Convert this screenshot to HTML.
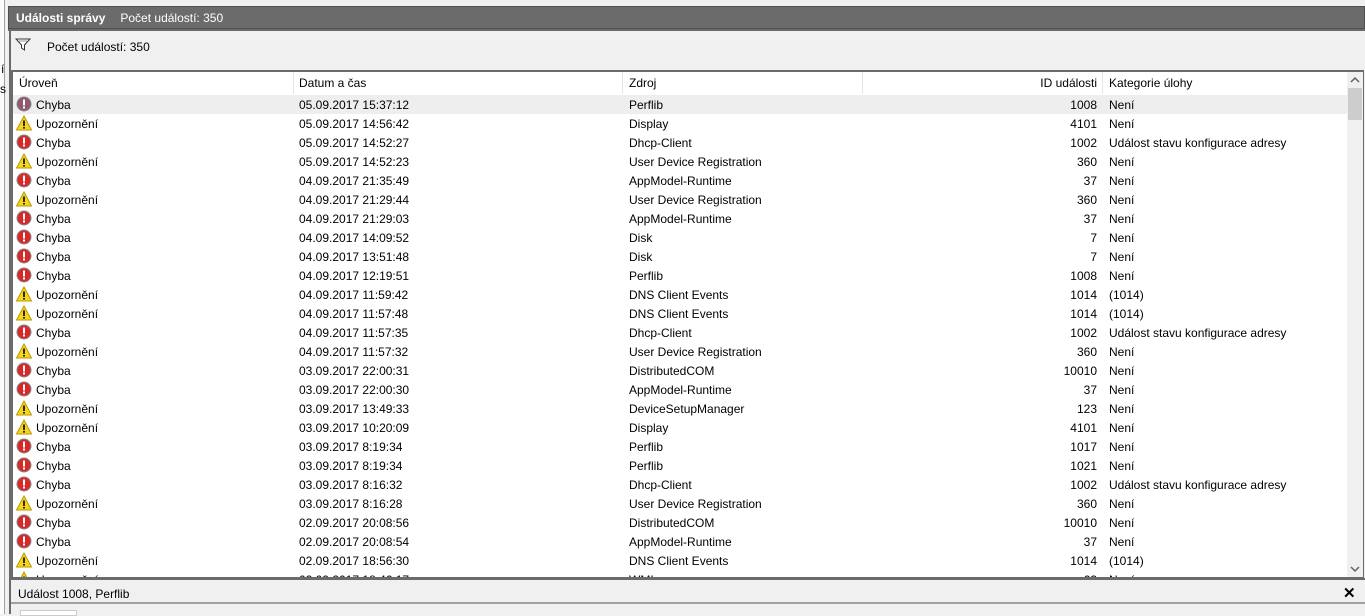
<!DOCTYPE html>
<html><head><meta charset="utf-8"><style>
*{margin:0;padding:0;box-sizing:border-box}
body{width:1365px;height:614px;overflow:hidden;background:#f0f0f0;font-family:"Liberation Sans",sans-serif;font-size:12px;color:#000;position:relative}
.abs{position:absolute}
.row{position:absolute;left:12px;width:1334px;height:19px;white-space:nowrap}
.row span{position:absolute;top:3px}
.sel{background:#eeeeee}
</style></head><body>
<div class="abs" style="left:0;top:0;width:5px;height:614px;background:#fbfbfb;border-right:1px solid #a0a0a0"></div>
<div class="abs" style="left:1px;top:62px;font-size:12px">í</div>
<div class="abs" style="left:0;top:82px;font-size:12px">s</div>
<div class="abs" style="left:8px;top:6px;width:1357px;height:23px;background:#6b6b6b;border:1px solid #4f4f4f;color:#fff;padding:4px 0 0 7px"><b>Události správy</b><span style="margin-left:15px">Počet událostí: 350</span></div>
<div class="abs" style="left:8px;top:29px;width:1357px;height:2px;background:#6b6b6b"></div>
<div class="abs" style="left:9px;top:31px;width:2px;height:583px;background:#6b6b6b"></div>
<svg class="abs" style="left:15px;top:38px" width="16" height="14" viewBox="0 0 16 14"><path d="M1 1H15L9.5 7V12L6.5 10V7Z" fill="#fff" stroke="#333"/><path d="M4 3H12" stroke="#999"/></svg>
<div class="abs" style="left:47px;top:40px">Počet událostí: 350</div>
<div class="abs" style="left:11px;top:70px;width:1353px;height:508px;background:#fff;border:1px solid #6b6b6b;border-width:2px 1px 1px 2px"></div>
<div class="abs" style="left:13px;top:72px;width:1334px;height:22px;background:#fff"></div>
<div class="abs" style="left:19px;top:76px">Úroveň</div>
<div class="abs" style="left:293px;top:72px;width:1px;height:22px;background:#e5e5e5"></div>
<div class="abs" style="left:299px;top:76px">Datum a čas</div>
<div class="abs" style="left:622px;top:72px;width:1px;height:22px;background:#e5e5e5"></div>
<div class="abs" style="left:629px;top:76px">Zdroj</div>
<div class="abs" style="left:862px;top:72px;width:1px;height:22px;background:#e5e5e5"></div>
<div class="abs" style="left:862px;top:76px;width:235px;text-align:right">ID události</div>
<div class="abs" style="left:1102px;top:72px;width:1px;height:22px;background:#e5e5e5"></div>
<div class="abs" style="left:1109px;top:76px">Kategorie úlohy</div>
<div class="abs" style="left:1347px;top:72px;width:16px;height:505px;background:#f0f0f0"></div>
<div class="abs" style="left:1348px;top:88px;width:14px;height:32px;background:#cdcdcd"></div>
<svg class="abs" style="left:1350px;top:76px" width="10" height="8"><path d="M1 6L5 2L9 6" fill="none" stroke="#606060" stroke-width="1.5"/></svg>
<svg class="abs" style="left:1350px;top:565px" width="10" height="8"><path d="M1 2L5 6L9 2" fill="none" stroke="#606060" stroke-width="1.5"/></svg>
<div class="abs" style="left:13px;top:95px;width:1334px;height:482px;overflow:hidden" id="t"></div>
<div class="abs" style="left:11px;top:578px;width:1354px;height:2px;background:#6b6b6b"></div>
<div class="abs" style="left:11px;top:580px;width:1354px;height:24px;background:#f0f0f0;border-bottom:2px solid #a0a0a0"></div>
<div class="abs" style="left:18px;top:587px">Událost 1008, Perflib</div>
<div class="abs" style="left:1343px;top:584px;font-size:15px;font-weight:bold">✕</div>
<div class="abs" style="left:20px;top:610px;width:57px;height:6px;background:#fff;border:1px solid #ccc"></div>
<script>
var E='<svg width="16" height="16" style="position:absolute;left:3px;top:1px"><circle cx="8" cy="8" r="7" fill="C" stroke="#8a8a8a"/><rect x="7" y="3.5" width="2" height="6" fill="#fff"/><rect x="7" y="10.5" width="2" height="2" fill="#fff"/></svg>';
var W='<svg width="16" height="16" style="position:absolute;left:3px;top:1px"><path d="M8 1L15.5 15H0.5Z" fill="#f5d51d" stroke="#b89a00"/><rect x="7.2" y="5.5" width="1.6" height="5.5" fill="#000"/><rect x="7.2" y="12" width="1.6" height="1.6" fill="#000"/></svg>';
var d=[["C","05.09.2017 15:37:12","Perflib","1008","Není"],["W","05.09.2017 14:56:42","Display","4101","Není"],["C","05.09.2017 14:52:27","Dhcp-Client","1002","Událost stavu konfigurace adresy"],["W","05.09.2017 14:52:23","User Device Registration","360","Není"],["C","04.09.2017 21:35:49","AppModel-Runtime","37","Není"],["W","04.09.2017 21:29:44","User Device Registration","360","Není"],["C","04.09.2017 21:29:03","AppModel-Runtime","37","Není"],["C","04.09.2017 14:09:52","Disk","7","Není"],["C","04.09.2017 13:51:48","Disk","7","Není"],["C","04.09.2017 12:19:51","Perflib","1008","Není"],["W","04.09.2017 11:59:42","DNS Client Events","1014","(1014)"],["W","04.09.2017 11:57:48","DNS Client Events","1014","(1014)"],["C","04.09.2017 11:57:35","Dhcp-Client","1002","Událost stavu konfigurace adresy"],["W","04.09.2017 11:57:32","User Device Registration","360","Není"],["C","03.09.2017 22:00:31","DistributedCOM","10010","Není"],["C","03.09.2017 22:00:30","AppModel-Runtime","37","Není"],["W","03.09.2017 13:49:33","DeviceSetupManager","123","Není"],["W","03.09.2017 10:20:09","Display","4101","Není"],["C","03.09.2017 8:19:34","Perflib","1017","Není"],["C","03.09.2017 8:19:34","Perflib","1021","Není"],["C","03.09.2017 8:16:32","Dhcp-Client","1002","Událost stavu konfigurace adresy"],["W","03.09.2017 8:16:28","User Device Registration","360","Není"],["C","02.09.2017 20:08:56","DistributedCOM","10010","Není"],["C","02.09.2017 20:08:54","AppModel-Runtime","37","Není"],["W","02.09.2017 18:56:30","DNS Client Events","1014","(1014)"],["W","02.09.2017 18:46:17","WMI","63","Není"]];
var h='';d.forEach(function(r,i){var ic=r[0]=="C"?E.replace("C",i==0?"#8e5a72":"#d42a2a"):W;
h+='<div class="row'+(i==0?' sel':'')+'" style="left:0;top:'+(i*19)+'px">'+ic+'<span style="left:23px">'+(r[0]=="C"?"Chyba":"Upozornění")+'</span><span style="left:286px">'+r[1]+'</span><span style="left:616px">'+r[2]+'</span><span style="left:849px;width:235px;text-align:right">'+r[3]+'</span><span style="left:1096px">'+r[4]+'</span></div>';});
document.getElementById('t').innerHTML=h;
</script>
</body></html>
